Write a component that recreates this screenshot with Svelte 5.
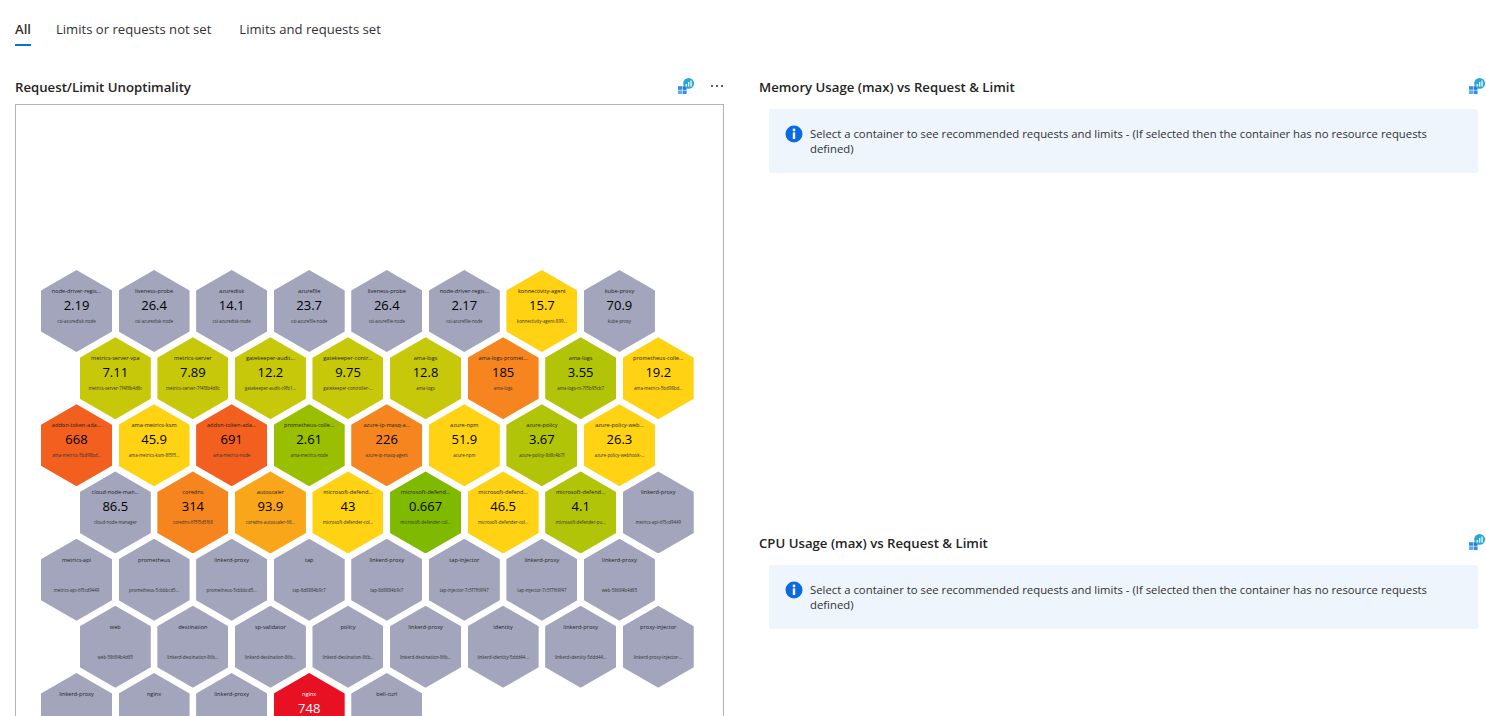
<script lang="ts">
  type Cell = [name: string, value: string, pod: string, tone: string];

  const rows: Cell[][] = [
    [
      ["node-driver-regis...", "2.19", "csi-azuredisk-node", "gray"],
      ["liveness-probe", "26.4", "csi-azuredisk-node", "gray"],
      ["azuredisk", "14.1", "csi-azuredisk-node", "gray"],
      ["azurefile", "23.7", "csi-azurefile-node", "gray"],
      ["liveness-probe", "26.4", "csi-azurefile-node", "gray"],
      ["node-driver-regis...", "2.17", "csi-azurefile-node", "gray"],
      ["konnectivity-agent", "15.7", "konnectivity-agent-899...", "yellow"],
      ["kube-proxy", "70.9", "kube-proxy", "gray"],
    ],
    [
      ["metrics-server-vpa", "7.11", "metrics-server-7f4f8b4d8c", "olive"],
      ["metrics-server", "7.89", "metrics-server-7f4f8b4d8c", "olive"],
      ["gatekeeper-audit...", "12.2", "gatekeeper-audit-c9fb1...", "olive"],
      ["gatekeeper-contr...", "9.75", "gatekeeper-controller-...", "olive"],
      ["ama-logs", "12.8", "ama-logs", "olive"],
      ["ama-logs-promet...", "185", "ama-logs", "orange"],
      ["ama-logs", "3.55", "ama-logs-rs-7f5b95cb7", "lime"],
      ["prometheus-colle...", "19.2", "ama-metrics-5bd98bd...", "yellow"],
    ],
    [
      ["addon-token-ada...", "668", "ama-metrics-5bd98bd...", "rust"],
      ["ama-metrics-ksm", "45.9", "ama-metrics-ksm-8f5f5...", "yellow"],
      ["addon-token-ada...", "691", "ama-metrics-node", "rust"],
      ["prometheus-colle...", "2.61", "ama-metrics-node", "grass"],
      ["azure-ip-masq-a...", "226", "azure-ip-masq-agent", "orange"],
      ["azure-npm", "51.9", "azure-npm", "yellow"],
      ["azure-policy", "3.67", "azure-policy-8d8c4b7f", "lime"],
      ["azure-policy-web...", "26.3", "azure-policy-webhook-...", "yellow"],
    ],
    [
      ["cloud-node-man...", "86.5", "cloud-node-manager", "gray"],
      ["coredns", "314", "coredns-6f5f5d5f68", "orange"],
      ["autoscaler", "93.9", "coredns-autoscaler-68...", "amber"],
      ["microsoft-defend...", "43", "microsoft-defender-col...", "yellow"],
      ["microsoft-defend...", "0.667", "microsoft-defender-col...", "green"],
      ["microsoft-defend...", "46.5", "microsoft-defender-col...", "yellow"],
      ["microsoft-defend...", "4.1", "microsoft-defender-pu...", "lime"],
      ["linkerd-proxy", "", "metrics-api-6f5cd9449", "gray"],
    ],
    [
      ["metrics-api", "", "metrics-api-6f5cd9449", "gray"],
      ["prometheus", "", "prometheus-5cbbbcd5...", "gray"],
      ["linkerd-proxy", "", "prometheus-5cbbbcd5...", "gray"],
      ["tap", "", "tap-8d8884b9c7", "gray"],
      ["linkerd-proxy", "", "tap-8d8884b9c7", "gray"],
      ["tap-injector", "", "tap-injector-7c5f7f69f47", "gray"],
      ["linkerd-proxy", "", "tap-injector-7c5f7f69f47", "gray"],
      ["linkerd-proxy", "", "web-58684b4d85", "gray"],
    ],
    [
      ["web", "", "web-58684b4d85", "gray"],
      ["destination", "", "linkerd-destination-86b...", "gray"],
      ["sp-validator", "", "linkerd-destination-86b...", "gray"],
      ["policy", "", "linkerd-destination-86b...", "gray"],
      ["linkerd-proxy", "", "linkerd-destination-86b...", "gray"],
      ["identity", "", "linkerd-identity-5ddd44...", "gray"],
      ["linkerd-proxy", "", "linkerd-identity-5ddd44...", "gray"],
      ["proxy-injector", "", "linkerd-proxy-injector-...", "gray"],
    ],
    [
      ["linkerd-proxy", "", "", "gray"],
      ["nginx", "", "", "gray"],
      ["linkerd-proxy", "", "", "gray"],
      ["nginx", "748", "", "red"],
      ["bell-curl", "", "", "gray"],
    ],
  ];

  const tabs = ["All", "Limits or requests not set", "Limits and requests set"];
  const panels = ["Memory Usage (max) vs Request & Limit", "CPU Usage (max) vs Request & Limit"];
  const note =
    "Select a container to see recommended requests and limits - (If selected then the container has no resource requests defined)";
</script>

{#snippet insights()}
  <svg class="insights" viewBox="0 0 16 16" width="16" height="16" aria-hidden="true">
    <rect x="0" y="8.2" width="4" height="3.6" fill="#2f8fe8" />
    <rect x="0" y="12.4" width="4" height="3.6" fill="#5aaef0" />
    <rect x="4.6" y="12.4" width="4" height="3.6" fill="#2f8fe8" />
    <rect x="4.6" y="8.2" width="4" height="3.6" fill="#1f77d8" />
    <circle cx="10.6" cy="5.4" r="5.4" fill="#27a8d8" />
    <rect x="7.6" y="6" width="1.3" height="2.6" fill="#fff" />
    <rect x="10" y="4" width="1.3" height="4.6" fill="#fff" />
    <rect x="12.4" y="2.6" width="1.3" height="6" fill="#fff" />
  </svg>
{/snippet}

<div class="page">
  <nav class="tabs">
    {#each tabs as tab, i}
      <span class="tab" class:active={i === 0}>{tab}</span>
    {/each}
  </nav>

  <div class="columns">
    <section class="left">
      <header class="head">
        <h2>Request/Limit Unoptimality</h2>
        <div class="tools">
          {@render insights()}
          <span class="more"><i></i><i></i><i></i></span>
        </div>
      </header>
      <div class="chart">
        {#each rows as row, r}
          <div class="row" class:shift={r % 2 === 1}>
            {#each row as [name, value, pod, tone]}
              <div class="hex {tone}">
                <div class="name">{name}</div>
                <div class="value">{value}</div>
                <div class="pod">{pod}</div>
              </div>
            {/each}
          </div>
        {/each}
      </div>
    </section>

    <div class="right">
      {#each panels as title}
        <section class="panel">
          <header class="head">
            <h2>{title}</h2>
            <div class="tools">{@render insights()}</div>
          </header>
          <div class="notice">
            <svg viewBox="0 0 18 18" width="18" height="18" aria-hidden="true">
              <circle cx="9" cy="9" r="8.5" fill="#0b6ae0" />
              <circle cx="9" cy="5" r="1.4" fill="#fff" />
              <rect x="7.8" y="7.4" width="2.4" height="6.6" fill="#fff" />
            </svg>
            <p>{note}</p>
          </div>
        </section>
      {/each}
    </div>
  </div>
</div>

<style>
  :global(body) {
    overflow: hidden;
    background: #fff;
  }

  .page {
    height: 716px;
    overflow: hidden;
    box-sizing: border-box;
    padding: 0 8px 0 15px;
    font-family: "Open Sans", "Noto Sans", sans-serif;
    color: #323130;
  }

  .tabs {
    display: flex;
    align-items: flex-start;
    gap: 28px;
    height: 46px;
    box-sizing: border-box;
    padding-top: 20px;
    font-size: 13.1px;
    line-height: 18px;
  }

  .tab {
    position: relative;
  }

  .tabs .active {
    margin-right: -3px;
    font-weight: 600;
  }

  .active::after {
    content: "";
    position: absolute;
    left: 0;
    right: 0;
    bottom: -8px;
    height: 2px;
    background: #0078d4;
  }

  .columns {
    display: flex;
    gap: 35px;
  }

  .left {
    flex: 0 0 709px;
  }

  .right {
    flex: 1;
  }

  .panel {
    height: 456px;
  }

  .head {
    display: flex;
    align-items: center;
    justify-content: space-between;
    height: 58px;
    box-sizing: border-box;
    padding-top: 24px;
  }

  h2 {
    margin: 0;
    font-size: 13.2px;
    font-weight: 600;
    line-height: 18px;
    color: #252423;
  }

  .tools {
    display: flex;
    align-items: center;
    gap: 17px;
    margin: -2px -7px 0 0;
  }

  .left .tools {
    margin-right: 1px;
  }

  .insights {
    display: block;
  }

  .more {
    display: flex;
    gap: 3px;
  }

  .more i {
    width: 2px;
    height: 2px;
    background: #605e5c;
  }

  .chart {
    height: 700px;
    box-sizing: border-box;
    padding: 165px 0 0 25px;
    border: 1px solid #b3b3b3;
    overflow: hidden;
  }

  .row {
    display: flex;
    gap: 6.57px;
    margin-bottom: -14.85px;
  }

  .shift {
    padding-left: 38.8px;
  }

  .hex {
    flex: 0 0 71px;
    height: 82px;
    box-sizing: border-box;
    padding-top: 16px;
    clip-path: polygon(50% 0, 100% 25%, 100% 75%, 50% 100%, 0 75%, 0 25%);
    text-align: center;
    white-space: nowrap;
    color: #000;
  }

  .name {
    height: 10px;
    font-size: 5.6px;
    line-height: 10px;
    color: #222;
  }

  .value {
    height: 15px;
    margin: 2px 0 3px;
    font-size: 13px;
    font-weight: 500;
    line-height: 15px;
  }

  .pod {
    height: 11px;
    font-size: 4.4px;
    line-height: 11px;
    color: #333;
  }

  .gray {
    background: #a2a5bb;
  }

  .yellow {
    background: #ffd213;
  }

  .olive {
    background: #c8c80a;
  }

  .lime {
    background: #b1c408;
  }

  .grass {
    background: #9abf00;
  }

  .green {
    background: #7fba00;
  }

  .amber {
    background: #faa61a;
  }

  .orange {
    background: #f6851f;
  }

  .rust {
    background: #f25f1e;
  }

  .red {
    background: #e81123;
  }

  .red,
  .red .name {
    color: #fff;
  }

  .notice {
    display: flex;
    gap: 7px;
    height: 64px;
    box-sizing: border-box;
    margin: 5px 0 0 10px;
    padding: 16px 40px 0 16px;
    border-radius: 2px;
    background: #eff5fd;
  }

  .notice svg {
    flex: none;
  }

  .notice p {
    margin: 1px 0 0;
    font-size: 11.33px;
    line-height: 15px;
  }
</style>
